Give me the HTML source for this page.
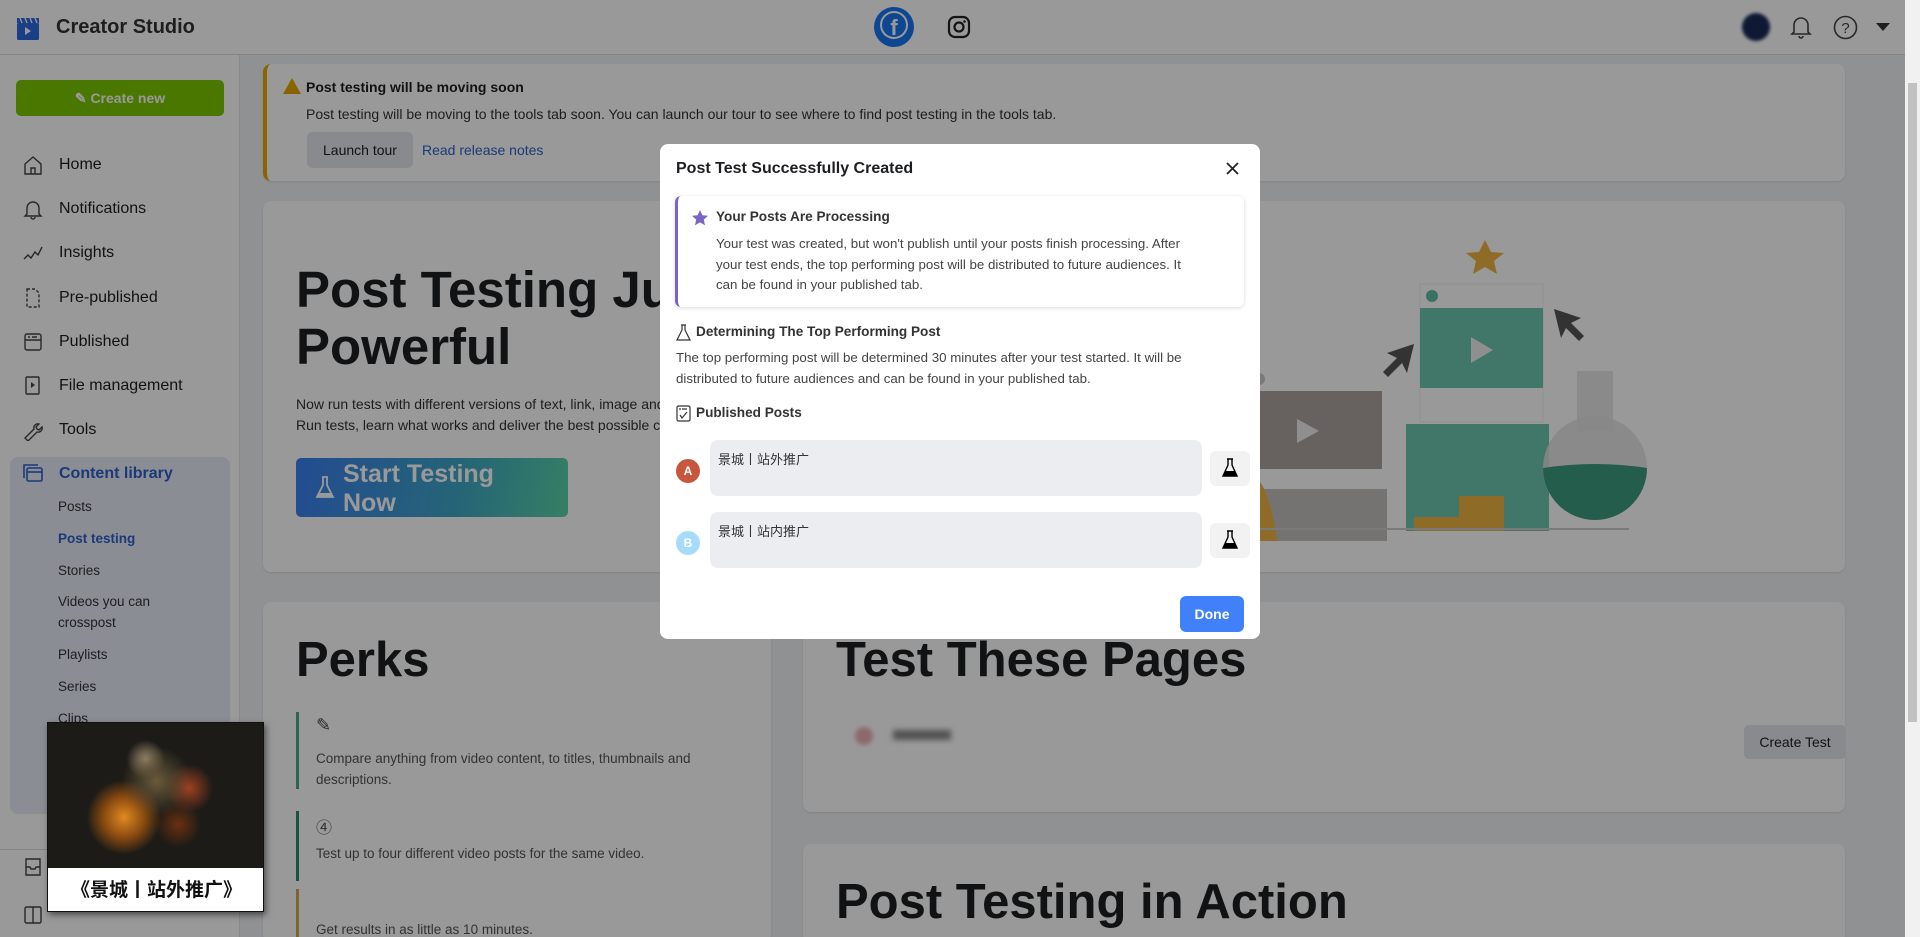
<!DOCTYPE html>
<html><head><meta charset="utf-8">
<style>
*{box-sizing:border-box;margin:0;padding:0}
html{width:1920px;height:937px;overflow:hidden}
body{width:1920px;height:937px;overflow:hidden;background:#f0f2f5;font-family:"Liberation Sans","Noto Sans CJK SC",sans-serif;color:#1c1e21;position:relative}
.abs{position:absolute}
.top{left:0;top:0;width:1905px;height:55px;background:#fff;border-bottom:1px solid #ddd}
.side{left:0;top:55px;width:240px;height:882px;background:#fff;border-right:1px solid #e4e4e4}
.nav{position:absolute;left:59px;font-size:16px;color:#1c1e21}
.ico{position:absolute;left:22px;width:22px;height:22px}
.sub{position:absolute;left:58px;font-size:13.5px;color:#333}
.card{position:absolute;background:#fff;border-radius:8px;box-shadow:0 1px 2px rgba(0,0,0,.1);overflow:hidden}
.ov{left:0;top:0;width:1905px;height:937px;background:rgba(0,0,0,.4)}
.modal{left:660px;top:144px;width:600px;height:495px;background:#fff;border-radius:8px}
.m{position:absolute;font-size:13.3px;color:#444;line-height:20.5px}
.mb{position:absolute;font-size:13.6px;font-weight:bold;color:#333}
</style></head><body>
<div class="abs top">
 <svg class="abs" style="left:16px;top:17px" width="24" height="24" viewBox="0 0 24 24"><rect x="1" y="6" width="22" height="17" rx="1.5" fill="#2d6ae0"/><rect x="1" y="1" width="22" height="5" fill="#2d6ae0"/><path d="M4 1l2 5M9 1l2 5M14 1l2 5M19 1l2 5" stroke="#fff" stroke-width="1.3"/><path d="M9 10l6 4-6 4z" fill="#fff"/></svg>
 <div class="abs" style="left:56px;top:16px;font-size:20px;font-weight:bold;color:#333">Creator Studio</div>
 <div class="abs" style="left:874px;top:7px;width:40px;height:40px;border-radius:50%;background:#1877f2"></div>
 <div class="abs" style="left:880px;top:11px;width:28px;height:28px;border-radius:50%;background:#fff"></div>
 <div class="abs" style="left:882px;top:13px;width:24px;height:24px;border-radius:50%;background:#1877f2;color:#fff;font-weight:bold;font-size:22px;text-align:center;line-height:30px;overflow:hidden">f</div>
 <svg class="abs" style="left:947px;top:15px" width="24" height="24" viewBox="0 0 24 24"><rect x="2" y="2" width="20" height="20" rx="6" fill="none" stroke="#222" stroke-width="2.2"/><circle cx="12" cy="12" r="4.5" fill="none" stroke="#222" stroke-width="2.2"/><circle cx="17.5" cy="6.5" r="1.3" fill="#222"/></svg>
 <div class="abs" style="left:1742px;top:13px;width:28px;height:28px;border-radius:50%;background:#1a2a55;filter:blur(1.5px)"></div>
 <svg class="abs" style="left:1789px;top:14px" width="24" height="26" viewBox="0 0 24 26"><path d="M5 18V11a7 7 0 0114 0v7l2 2H3z M10 22a2 2 0 004 0" fill="none" stroke="#444" stroke-width="1.6"/></svg>
 <svg class="abs" style="left:1833px;top:15px" width="25" height="25" viewBox="0 0 25 25"><circle cx="12.5" cy="12.5" r="11" fill="none" stroke="#444" stroke-width="1.6"/><text x="12.5" y="18" font-size="15" text-anchor="middle" fill="#444" font-family="Liberation Sans">?</text></svg>
 <div class="abs" style="left:1876px;top:23px;border:7px solid transparent;border-top:8px solid #333;border-bottom:0"></div>
</div>
<div class="abs side">
 <div class="abs" style="left:16px;top:25px;width:208px;height:36px;background:#7ac600;border-radius:5px;color:#fff;font-weight:bold;font-size:14px;text-align:center;line-height:36px">✎ Create new</div>
 <div class="nav" style="top:101px">Home</div>
 <div class="nav" style="top:145px">Notifications</div>
 <div class="nav" style="top:189px">Insights</div>
 <div class="nav" style="top:234px">Pre-published</div>
 <div class="nav" style="top:278px">Published</div>
 <div class="nav" style="top:322px">File management</div>
 <div class="nav" style="top:366px">Tools</div>
 <svg class="ico" style="top:99px" viewBox="0 0 22 22"><path d="M3 10L11 3l8 7v10H3z M9 20v-6h4v6" fill="none" stroke="#444" stroke-width="1.4"/></svg>
 <svg class="ico" style="top:143px" viewBox="0 0 22 22"><path d="M5 16V10a6 6 0 0112 0v6l2 2H3z M9 19a2 2 0 004 0" fill="none" stroke="#444" stroke-width="1.4"/></svg>
 <svg class="ico" style="top:187px" viewBox="0 0 22 22"><path d="M2 17l4-4 3 3 4-6 3 3 4-8" fill="none" stroke="#444" stroke-width="1.4"/></svg>
 <svg class="ico" style="top:232px" viewBox="0 0 22 22"><path d="M5 2h8l4 4v14H5z" fill="none" stroke="#444" stroke-width="1.4" stroke-dasharray="3 2"/></svg>
 <svg class="ico" style="top:276px" viewBox="0 0 22 22"><rect x="3" y="3" width="16" height="16" rx="2" fill="none" stroke="#444" stroke-width="1.4"/><path d="M3 9h16M6 6h2M10 6h5" stroke="#444" stroke-width="1.4"/></svg>
 <svg class="ico" style="top:320px" viewBox="0 0 22 22"><rect x="4" y="2" width="13" height="17" rx="1" fill="none" stroke="#444" stroke-width="1.4"/><path d="M9 7l4 3-4 3z" fill="#444"/></svg>
 <svg class="ico" style="top:364px" viewBox="0 0 22 22"><path d="M3 19l9-9a4 4 0 015-5l-3 3 1 2 2 1 3-3a4 4 0 01-5 5l-9 9z" fill="none" stroke="#444" stroke-width="1.4"/></svg>
 <div class="abs" style="left:10px;top:402px;width:220px;height:357px;background:#e7ecf7;border-radius:8px"></div>
 <svg class="ico" style="top:407px" viewBox="0 0 22 22"><rect x="5" y="6" width="15" height="13" rx="1.5" fill="none" stroke="#2d5fc8" stroke-width="1.6"/><path d="M2 16V3h14" fill="none" stroke="#2d5fc8" stroke-width="1.6"/><path d="M5 10h15" stroke="#2d5fc8" stroke-width="1.6"/></svg>
 <div class="nav" style="top:410px;color:#2d5fc8;font-weight:bold">Content library</div>
 <div class="sub" style="top:444px">Posts</div>
 <div class="sub" style="top:476px;color:#2d5fc8;font-weight:bold">Post testing</div>
 <div class="sub" style="top:508px">Stories</div>
 <div class="sub" style="top:539px">Videos you can</div>
 <div class="sub" style="top:560px">crosspost</div>
 <div class="sub" style="top:592px">Playlists</div>
 <div class="sub" style="top:624px">Series</div>
 <div class="sub" style="top:656px">Clips</div>
 <div class="abs" style="left:0;top:794px;width:240px;height:1px;background:#ddd"></div>
 <svg class="ico" style="top:801px" viewBox="0 0 22 22"><path d="M4 3h14v16H4z M4 11h4l1 2h4l1-2h4" fill="none" stroke="#444" stroke-width="1.4"/></svg>
 <svg class="ico" style="top:849px" viewBox="0 0 22 22"><rect x="3" y="3" width="16" height="16" rx="1.5" fill="none" stroke="#444" stroke-width="1.4"/><path d="M11 3v16" stroke="#444" stroke-width="1.4"/></svg>
</div>
<div class="card" style="left:263px;top:64px;width:1582px;height:117px;border-left:4px solid #e6a700">
 <div class="abs" style="left:16px;top:14px;width:0;height:0;border-left:9px solid transparent;border-right:9px solid transparent;border-bottom:16px solid #e6a700"></div>
 <div class="abs" style="left:39px;top:15px;font-size:14px;font-weight:bold">Post testing will be moving soon</div>
 <div class="abs" style="left:39px;top:42px;font-size:14px;color:#333">Post testing will be moving to the tools tab soon. You can launch our tour to see where to find post testing in the tools tab.</div>
 <div class="abs" style="left:40px;top:68px;width:106px;height:36px;background:#e4e6eb;border-radius:5px;font-size:14px;text-align:center;line-height:36px">Launch tour</div>
 <div class="abs" style="left:155px;top:78px;font-size:14px;color:#2d5fc8">Read release notes</div>
</div>
<div class="card" style="left:263px;top:201px;width:1582px;height:371px">
 <div class="abs" style="left:33px;top:60px;font-size:51px;font-weight:bold;line-height:57px;color:#1c1e21">Post Testing Just Got More<br>Powerful</div>
 <div class="abs" style="left:33px;top:193px;font-size:14px;line-height:21px;color:#333">Now run tests with different versions of text, link, image and video.<br>Run tests, learn what works and deliver the best possible content.</div>
 <div class="abs" style="left:33px;top:257px;width:272px;height:59px;border-radius:5px;background:linear-gradient(100deg,#3a7ff2,#3fa8c6 60%,#5ad4a8)">
  <svg class="abs" style="left:18px;top:17px" width="22" height="26" viewBox="0 0 22 26"><path d="M8 2h6M9 2v8L3 22h16L13 10V2" fill="none" stroke="#fff" stroke-width="1.8"/><path d="M5 18h12l2 4H3z" fill="#fff"/></svg>
  <div class="abs" style="left:47px;top:2px;font-size:25px;font-weight:bold;color:#fff;line-height:29px">Start Testing<br>Now</div>
 </div>
 <svg class="abs" style="left:986px;top:30px" width="420" height="310" viewBox="0 0 420 310">
  <rect x="0" y="137" width="133" height="122" fill="#fff"/><circle cx="10" cy="148" r="6" fill="#ccc"/><rect x="0" y="160" width="133" height="78" fill="#aca49f"/><path d="M48 188l22 12-22 12z" fill="#eee"/>
  <rect x="0" y="258" width="138" height="52" fill="#c4c0bc"/>
  <path d="M0 240q20 10 28 70H0z" fill="#efb244"/>
  <rect x="171" y="53" width="123" height="138" fill="#fff" stroke="#eee"/><circle cx="183" cy="65" r="6" fill="#5fbfa6"/><rect x="171" y="77" width="123" height="80" fill="#6dc6ad"/><path d="M222 106l22 13-22 13z" fill="#eee"/>
  <rect x="157" y="193" width="143" height="107" fill="#6dc6ad"/>
  <rect x="210" y="265" width="45" height="35" fill="#efb244"/><rect x="165" y="286" width="45" height="14" fill="#efb244"/>
  <circle cx="346" cy="237" r="52" fill="#e2e2e2" opacity=".85"/><rect x="328" y="140" width="36" height="60" fill="#e2e2e2" opacity=".85"/>
  <path d="M294 237q52-8 104 0a52 52 0 01-104 0z" fill="#3d9b7e"/>
  <line x1="0" y1="298" x2="380" y2="298" stroke="#ccc" stroke-width="2"/>
  <path d="M236 9l6 12 13 1-10 8 3 13-12-7-12 7 3-13-10-8 13-1z" fill="#efb244"/>
  <path d="M165 113l-27 9 10 5-14 14 5 5 14-14 5 10z" fill="#555"/>
  <path d="M305 78l27 9-10 5 13 13-5 5-13-13-5 10z" fill="#555"/>
 </svg>
</div>
<div class="card" style="left:263px;top:602px;width:508px;height:340px">
 <div class="abs" style="left:33px;top:30px;font-size:49px;font-weight:bold">Perks</div>
 <div class="abs" style="left:33px;top:110px;width:3px;height:77px;background:#4fa88a"></div>
 <div class="abs" style="left:53px;top:113px;font-size:18px;color:#444">✎</div>
 <div class="abs" style="left:53px;top:146px;font-size:13.5px;line-height:21px;color:#555">Compare anything from video content, to titles, thumbnails and<br>descriptions.</div>
 <div class="abs" style="left:33px;top:209px;width:3px;height:70px;background:#2f8a6a"></div>
 <div class="abs" style="left:53px;top:212px;font-size:16px;color:#555">④</div>
 <div class="abs" style="left:53px;top:244px;font-size:13.5px;color:#555">Test up to four different video posts for the same video.</div>
 <div class="abs" style="left:33px;top:287px;width:3px;height:60px;background:#d6a74f"></div>
 <div class="abs" style="left:53px;top:320px;font-size:13.5px;color:#555">Get results in as little as 10 minutes.</div>
</div>
<div class="card" style="left:803px;top:602px;width:1042px;height:210px">
 <div class="abs" style="left:33px;top:30px;font-size:49px;font-weight:bold">Test These Pages</div>
 <div class="abs" style="left:52px;top:125px;width:18px;height:18px;border-radius:50%;background:#e9b0b5;filter:blur(2px)"></div>
 <div class="abs" style="left:90px;top:128px;width:58px;height:10px;background:#888;filter:blur(3px)"></div>
 <div class="abs" style="left:941px;top:123px;width:102px;height:34px;background:#e4e6eb;border-radius:5px;font-size:14px;text-align:center;line-height:34px">Create Test</div>
</div>
<div class="card" style="left:803px;top:844px;width:1042px;height:100px">
 <div class="abs" style="left:33px;top:30px;font-size:49px;font-weight:bold">Post Testing in Action</div>
</div>
<div class="abs ov"></div>
<div class="abs" style="left:1905px;top:0;width:15px;height:937px;background:#f1f1f1"></div>
<div class="abs" style="left:1908px;top:83px;width:9px;height:639px;background:#c1c1c1"></div>
<div class="abs" style="left:47px;top:722px;width:217px;height:190px;background:#1e1c18;border:1px solid #111;box-shadow:2px 3px 6px rgba(0,0,0,.5);overflow:hidden">
 <div class="abs" style="left:0;top:0;width:217px;height:145px;background:radial-gradient(circle at 50% 40%,#6a5a3a 0,transparent 25%),radial-gradient(circle at 35% 65%,#e08a20 0,#8a4a10 12%,transparent 22%),radial-gradient(circle at 65% 45%,#a04020 0,transparent 15%),radial-gradient(circle at 45% 25%,#9a8a70 0,transparent 12%),radial-gradient(circle at 60% 70%,#6a3010 0,transparent 14%),#1c1b17"></div>
 <div class="abs" style="left:0;top:145px;width:217px;height:45px;background:#fff;font-size:19px;font-weight:bold;color:#111;text-align:center;line-height:45px">《景城丨站外推广》</div>
</div>
<div class="abs modal">
 <div class="mb" style="left:16px;top:16px;font-size:16px;color:#1c1e21">Post Test Successfully Created</div>
 <svg class="abs" style="left:565px;top:17px" width="15" height="15" viewBox="0 0 15 15"><path d="M2 2l11 11M13 2L2 13" stroke="#222" stroke-width="1.8"/></svg>
 <div class="abs" style="left:15px;top:52px;width:569px;height:111px;border-radius:6px;box-shadow:0 1px 4px rgba(0,0,0,.15);border-left:3px solid #7b64c8"></div>
 <svg class="abs" style="left:31px;top:65px" width="18" height="18" viewBox="0 0 18 18"><path d="M9 1l2.4 5.2 5.6.6-4.2 3.8 1.2 5.6L9 13.4 4 16.2l1.2-5.6L1 6.8l5.6-.6z" fill="#7b64c8"/></svg>
 <div class="mb" style="left:56px;top:65px">Your Posts Are Processing</div>
 <div class="m" style="left:56px;top:90px;width:482px">Your test was created, but won't publish until your posts finish processing. After your test ends, the top performing post will be distributed to future audiences. It can be found in your published tab.</div>
 <svg class="abs" style="left:16px;top:180px" width="15" height="17" viewBox="0 0 15 17"><path d="M5 1h5M6 1v5L1 16h13L9 6V1" fill="none" stroke="#333" stroke-width="1.2"/></svg>
 <div class="mb" style="left:36px;top:180px">Determining The Top Performing Post</div>
 <div class="m" style="left:16px;top:204px;width:556px">The top performing post will be determined 30 minutes after your test started. It will be distributed to future audiences and can be found in your published tab.</div>
 <svg class="abs" style="left:16px;top:261px" width="15" height="17" viewBox="0 0 15 17"><rect x="1" y="1" width="13" height="15" rx="1.5" fill="none" stroke="#333" stroke-width="1.2"/><path d="M3 4h2M6 4h5M4 10l2 3 5-6" fill="none" stroke="#333" stroke-width="1.2"/></svg>
 <div class="mb" style="left:36px;top:261px">Published Posts</div>
 <div class="abs" style="left:16px;top:315px;width:24px;height:24px;border-radius:50%;background:#c8553d;color:#fff;font-size:12px;font-weight:bold;text-align:center;line-height:24px">A</div>
 <div class="abs" style="left:50px;top:296px;width:492px;height:56px;border-radius:8px;background:#ebedf0;font-size:13px;color:#333;padding:9px 8px">景城丨站外推广</div>
 <div class="abs" style="left:550px;top:307px;width:40px;height:35px;border-radius:6px;background:#f2f2f2"></div>
 <svg class="abs" style="left:562px;top:314px" width="16" height="20" viewBox="0 0 16 20"><path d="M5 1h6M6 1v6L1 18h14L10 7V1" fill="none" stroke="#000" stroke-width="1.4"/><path d="M3 13h10l2 5H1z" fill="#000"/></svg>
 <div class="abs" style="left:16px;top:387px;width:24px;height:24px;border-radius:50%;background:#a6dcfa;color:#fff;font-size:12px;font-weight:bold;text-align:center;line-height:24px">B</div>
 <div class="abs" style="left:50px;top:368px;width:492px;height:56px;border-radius:8px;background:#ebedf0;font-size:13px;color:#333;padding:9px 8px">景城丨站内推广</div>
 <div class="abs" style="left:550px;top:379px;width:40px;height:35px;border-radius:6px;background:#f2f2f2"></div>
 <svg class="abs" style="left:562px;top:386px" width="16" height="20" viewBox="0 0 16 20"><path d="M5 1h6M6 1v6L1 18h14L10 7V1" fill="none" stroke="#000" stroke-width="1.4"/><path d="M3 13h10l2 5H1z" fill="#000"/></svg>
 <div class="abs" style="left:520px;top:452px;width:64px;height:36px;border-radius:6px;background:#4080f8;color:#fff;font-size:14px;font-weight:bold;text-align:center;line-height:36px">Done</div>
</div>
</body></html>
